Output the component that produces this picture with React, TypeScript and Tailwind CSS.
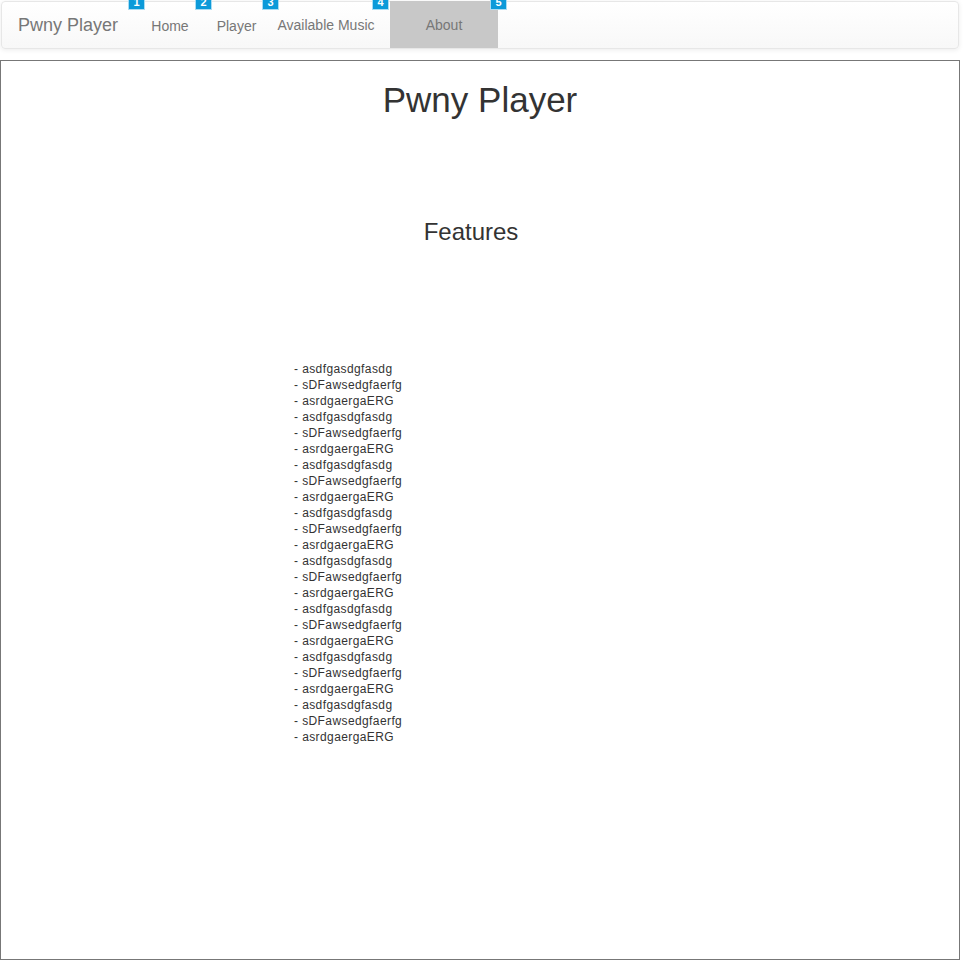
const features = ['asdfgasdgfasdg', 'sDFawsedgfaerfg', 'asrdgaergaERG'];

const items = Array.from({ length: 8 }).flatMap(() => features);

// hint badges sitting over the nav, clipped by the top of the window
const badges = [
  { n: 1, x: 'left-[126px]' },
  { n: 2, x: 'left-[193px]' },
  { n: 3, x: 'left-[260px]' },
  { n: 4, x: 'left-[370px]' },
  { n: 5, x: 'left-[488px]' },
];

export default function App() {
  return (
    <div className="w-[960px] bg-white text-[#333] font-['Liberation_Sans',Arial,sans-serif]">
      {/* Navbar */}
      <div className="relative mx-px mt-px w-[958px] h-[48px] rounded-[4px] border border-[#e7e7e7] bg-gradient-to-b from-white to-[#f8f8f8] shadow-[0_1px_5px_rgba(0,0,0,0.08)] flex items-stretch text-[#777]">
        <div className="w-[135px] pl-[16px] flex items-center text-[18px] pt-[1px]">Pwny Player</div>
        <div className="w-[66px] flex items-center justify-center text-[14px] pt-[2px]">Home</div>
        <div className="w-[67px] flex items-center justify-center text-[14px] pt-[2px]">Player</div>
        <div className="w-[112px] flex items-center justify-center text-[14px]">Available Music</div>
        <div className="ml-[8px] -mt-px w-[108px] bg-[#c8c8c8] flex items-center justify-center text-[14px] pt-[1px]">About</div>
        {badges.map((b) => (
          <div
            key={b.n}
            className={`absolute -top-[8px] ${b.x} w-[17px] h-[16px] bg-[#0c9ad9] border border-[#a9dcf3] text-white text-[11px] font-bold leading-[14px] text-center`}
          >
            {b.n}
          </div>
        ))}
      </div>

      {/* Main panel */}
      <div className="mt-[11px] h-[900px] border border-[#777]">
        <h1 className="mt-[20px] text-center text-[35px] leading-[1.1] font-normal">Pwny Player</h1>
        <h2 className="mt-[99px] pr-[18px] text-center text-[24px] leading-[1.1] font-normal">Features</h2>
        <ul className="mt-[116px] pl-[293px] text-[12px] leading-[16px] tracking-[0.4px]">
          {items.map((t, i) => (
            <li key={i}>- {t}</li>
          ))}
        </ul>
      </div>
    </div>
  );
}
